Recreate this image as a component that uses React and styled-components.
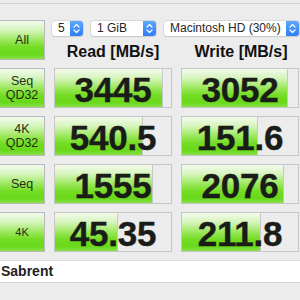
import React from 'react';
import styled, { createGlobalStyle } from 'styled-components';

const Global = createGlobalStyle`
  html, body {
    margin: 0;
    padding: 0;
    background: #ececec;
    overflow: hidden;
  }
  body {
    font-family: "Liberation Sans", Arial, sans-serif;
  }
`;

const greenFill = `linear-gradient(to bottom,
  #f3fbee 0%,
  #d6f4bc 24%,
  #9be85c 50%,
  #72dc22 70%,
  #6ad81a 88%,
  #86e24a 100%)`;

const Window = styled.div`
  width: 300px;
  height: 300px;
  display: flex;
  flex-direction: column;
  background: #ececec;
  border-top: 1px solid #d4d4d4;
  margin-top: 3px;
  box-sizing: border-box;
`;

const Board = styled.div`
  display: grid;
  grid-template-columns: 46px 118px 118px;
  grid-auto-rows: 40px;
  column-gap: 9px;
  row-gap: 8px;
  margin-top: 16px;
  margin-left: -1px;
  align-items: stretch;
`;

const TestButton = styled.div`
  box-sizing: border-box;
  border: 1px solid #b9b9b9;
  background: ${greenFill};
  display: flex;
  align-items: center;
  justify-content: center;
  text-align: center;
  font-size: ${p => (p.$small ? 11 : 12.5)}px;
  line-height: 14px;
  color: #243018;
`;

const Controls = styled.div`
  grid-column: 2 / 4;
  display: grid;
  grid-template-columns: 118px 118px;
  column-gap: 10px;
  grid-template-rows: 16px 1fr;
`;

const SelectRow = styled.div`
  grid-column: 1 / 3;
  display: flex;
  gap: 8px;
  margin-left: -2px;
  margin-top: 1px;
`;

const Select = styled.div`
  width: ${p => p.$w}px;
  flex: none;
  height: 15px;
  display: flex;
  background: #fff;
  border-radius: 3px;
  box-shadow: 0 0 0 0.5px #c4c4c4, 0 1px 1px rgba(0,0,0,0.12);
  overflow: hidden;
  font-size: 12px;
  color: #262626;
`;

const SelectText = styled.span`
  flex: 1;
  padding-left: 6px;
  line-height: 15px;
  white-space: nowrap;
`;

const Stepper = styled.span`
  width: 13px;
  flex: none;
  background: linear-gradient(to bottom, #5aa8fb, #2f7df6);
  display: flex;
  align-items: center;
  justify-content: center;
`;

const Heading = styled.div`
  text-align: center;
  font-weight: bold;
  font-size: 16px;
  color: #111;
  padding-top: 7px;
`;

const Cell = styled.div`
  position: relative;
  box-sizing: border-box;
  border: 1px solid #c6c6c6;
  background: #ececec;
  display: flex;
  align-items: center;
  justify-content: center;
  overflow: hidden;
`;

const Bar = styled.div`
  position: absolute;
  left: 0;
  top: 0;
  bottom: 0;
  background: ${greenFill};
  border-right: 1px solid #c8c8c8;
`;

const Value = styled.span`
  position: relative;
  font-weight: bold;
  font-size: 35px;
  letter-spacing: -0.2px;
  color: #1a1c18;
  line-height: 1;
  padding-top: 2px;
  -webkit-text-stroke: 0.4px #1a1c18;
`;

const NameField = styled.div`
  margin-top: 8px;
  height: 21px;
  background: #fff;
  border-top: 1px solid #dcdcdc;
  border-bottom: 1px solid #d4d4d4;
  font-weight: bold;
  font-size: 14px;
  color: #222;
  line-height: 21px;
  padding-left: 1px;
`;

const Desk = styled.div`
  margin-top: auto;
  height: 2px;
  background: #9d7a5c;
`;

const Chevrons = () => (
  <svg width="7" height="11" viewBox="0 0 7 11">
    <path d="M1 4 L3.5 1.5 L6 4 M1 7 L3.5 9.5 L6 7" fill="none" stroke="#fff" strokeWidth="1.2" strokeLinecap="round" strokeLinejoin="round" />
  </svg>
);

const rows = [
  { label: ['Seq', 'QD32'], read: ['3445', 92], write: ['3052', 90.5] },
  { label: ['4K', 'QD32'], read: ['540.5', 75], write: ['151.6', 64.6] },
  { label: ['Seq'], read: ['1555', 84], write: ['2076', 87] },
  { label: ['4K'], read: ['45.35', 53.5], write: ['211.8', 67] },
];

const Result = ({ value, pct }) => (
  <Cell>
    <Bar style={{ width: `${pct}%` }} />
    <Value>{value}</Value>
  </Cell>
);

export default function App() {
  return (
    <>
      <Global />
      <Window>
        <Board>
          <TestButton>All</TestButton>
          <Controls>
            <SelectRow>
              <Select $w={31}><SelectText>5</SelectText><Stepper><Chevrons /></Stepper></Select>
              <Select $w={65}><SelectText>1 GiB</SelectText><Stepper><Chevrons /></Stepper></Select>
              <Select $w={135}><SelectText>Macintosh HD (30%)</SelectText><Stepper><Chevrons /></Stepper></Select>
            </SelectRow>
            <Heading>Read [MB/s]</Heading>
            <Heading>Write [MB/s]</Heading>
          </Controls>
          {rows.map(r => (
            <React.Fragment key={r.label.join(' ') + r.read[0]}>
              <TestButton $small={r.label[0] === '4K' && r.label.length === 1}>
                <div>{r.label.map((l, i) => <div key={i}>{l}</div>)}</div>
              </TestButton>
              <Result value={r.read[0]} pct={r.read[1]} />
              <Result value={r.write[0]} pct={r.write[1]} />
            </React.Fragment>
          ))}
        </Board>
        <NameField>Sabrent</NameField>
        <Desk />
      </Window>
    </>
  );
}
